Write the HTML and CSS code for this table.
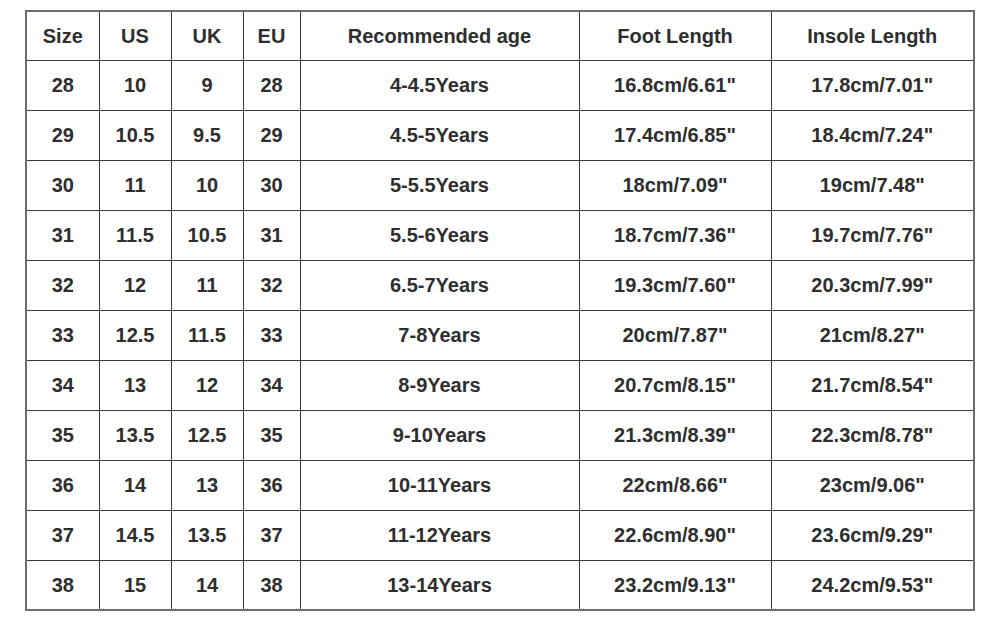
FILE: index.html
```html
<!DOCTYPE html>
<html>
<head>
<meta charset="utf-8">
<link rel="stylesheet" href="styles.css">
</head>
<body>
<table class="size-table">
  <colgroup>
    <col class="c1"><col class="c2"><col class="c3"><col class="c4"><col class="c5"><col class="c6"><col class="c7">
  </colgroup>
  <tr><th>Size</th><th>US</th><th>UK</th><th>EU</th><th>Recommended age</th><th>Foot Length</th><th>Insole Length</th></tr>
  <tr><td>28</td><td>10</td><td>9</td><td>28</td><td>4-4.5Years</td><td>16.8cm/6.61"</td><td>17.8cm/7.01"</td></tr>
  <tr><td>29</td><td>10.5</td><td>9.5</td><td>29</td><td>4.5-5Years</td><td>17.4cm/6.85"</td><td>18.4cm/7.24"</td></tr>
  <tr><td>30</td><td>11</td><td>10</td><td>30</td><td>5-5.5Years</td><td>18cm/7.09"</td><td>19cm/7.48"</td></tr>
  <tr><td>31</td><td>11.5</td><td>10.5</td><td>31</td><td>5.5-6Years</td><td>18.7cm/7.36"</td><td>19.7cm/7.76"</td></tr>
  <tr><td>32</td><td>12</td><td>11</td><td>32</td><td>6.5-7Years</td><td>19.3cm/7.60"</td><td>20.3cm/7.99"</td></tr>
  <tr><td>33</td><td>12.5</td><td>11.5</td><td>33</td><td>7-8Years</td><td>20cm/7.87"</td><td>21cm/8.27"</td></tr>
  <tr><td>34</td><td>13</td><td>12</td><td>34</td><td>8-9Years</td><td>20.7cm/8.15"</td><td>21.7cm/8.54"</td></tr>
  <tr><td>35</td><td>13.5</td><td>12.5</td><td>35</td><td>9-10Years</td><td>21.3cm/8.39"</td><td>22.3cm/8.78"</td></tr>
  <tr><td>36</td><td>14</td><td>13</td><td>36</td><td>10-11Years</td><td>22cm/8.66"</td><td>23cm/9.06"</td></tr>
  <tr><td>37</td><td>14.5</td><td>13.5</td><td>37</td><td>11-12Years</td><td>22.6cm/8.90"</td><td>23.6cm/9.29"</td></tr>
  <tr><td>38</td><td>15</td><td>14</td><td>38</td><td>13-14Years</td><td>23.2cm/9.13"</td><td>24.2cm/9.53"</td></tr>
</table>
</body>
</html>
```
FILE: styles.css
```css
html, body {
  margin: 0;
  padding: 0;
  background: #ffffff;
}
body {
  padding: 10px 0 0 25px;
  font-family: "Liberation Sans", Arial, sans-serif;
}
.size-table {
  border-collapse: collapse;
  table-layout: fixed;
  width: 948px;
  border: 2px solid #6e6e6e;
}
.c1 { width: 73px; }
.c2 { width: 72px; }
.c3 { width: 72px; }
.c4 { width: 57px; }
.c5 { width: 279px; }
.c6 { width: 192px; }
.c7 { width: 203px; }
.size-table th,
.size-table td {
  height: 49px;
  padding: 0;
  border: 1px solid #3a3a3a;
  text-align: center;
  vertical-align: middle;
  font-size: 20px;
  font-weight: bold;
  color: #2e2e2e;
}
.size-table tr:first-child th { border-top: 2px solid #6e6e6e; height: 48px; }
.size-table tr:last-child td { border-bottom: 2px solid #6e6e6e; height: 48px; }
.size-table th:first-child, .size-table td:first-child { border-left: 2px solid #6e6e6e; }
.size-table th:last-child, .size-table td:last-child { border-right: 2px solid #6e6e6e; }
```
